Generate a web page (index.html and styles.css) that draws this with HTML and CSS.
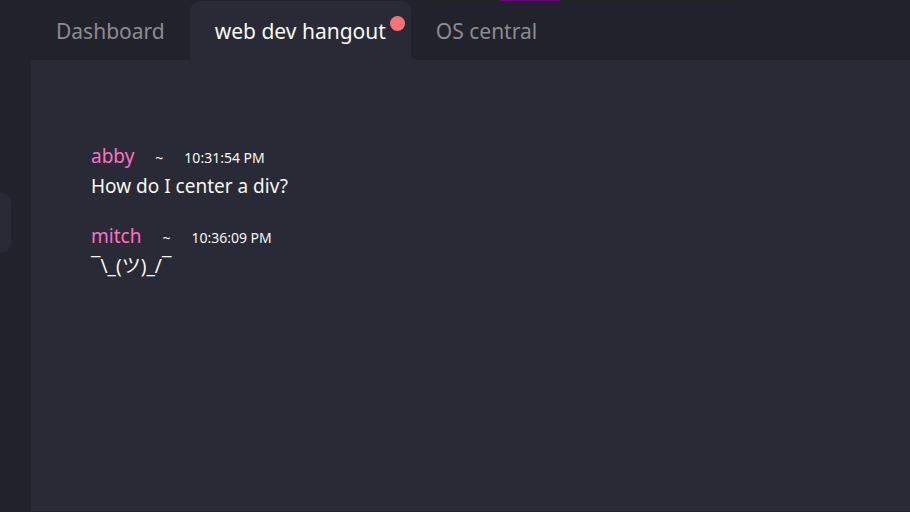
FILE: index.html
```html
<!DOCTYPE html>
<html lang="en">
<head>
<meta charset="utf-8">
<meta name="viewport" content="width=device-width, initial-scale=1">
<title>web dev hangout</title>
<link rel="stylesheet" href="styles.css">
</head>
<body>
<div class="app">
  <aside class="rail"><button class="rail-item" type="button" aria-label="Server"></button></aside>
  <div class="workspace">
    <nav class="tabs">
      <a class="tab" href="#dashboard">Dashboard</a>
      <a class="tab tab-active" href="#hangout" aria-current="page">web dev hangout<span class="unread"></span></a>
      <a class="tab" href="#central">OS central</a>
      <div class="progress"><span class="progress-mark"></span></div>
    </nav>
    <main class="chat">
      <article class="message">
        <header class="meta"><span class="author">abby</span><span class="sep">~</span><time>10:31:54 PM</time></header>
        <p class="text">How do I center a div?</p>
      </article>
      <article class="message">
        <header class="meta"><span class="author">mitch</span><span class="sep">~</span><time>10:36:09 PM</time></header>
        <p class="text">¯\_(ツ)_/¯</p>
      </article>
    </main>
  </div>
</div>
</body>
</html>
```
FILE: styles.css
```css
* { box-sizing: border-box; }

body {
  margin: 0;
  background: #22222c;
  color: #f8f8f2;
  font-family: "Segoe UI", "Noto Sans", "Noto Sans CJK JP", sans-serif;
}

.app {
  display: flex;
  min-height: 100vh;
}

.rail {
  flex: none;
  width: 31px;
  display: flex;
  align-items: flex-start;
  padding-top: 193px;
}

.rail-item {
  width: 11px;
  height: 60px;
  padding: 0;
  border: 0;
  border-radius: 0 10px 10px 0;
  background: #282a35;
}

.workspace {
  flex: 1;
  display: flex;
  flex-direction: column;
}

.tabs {
  position: relative;
  display: flex;
  height: 60px;
  padding-top: 1px;
}

.tab {
  position: relative;
  padding: 14px 25px 0;
  color: #8c8c8f;
  font-size: 21px;
  line-height: 32px;
  text-decoration: none;
  white-space: nowrap;
}

.tab-active {
  border-radius: 10px 10px 0 0;
  background: #282a35;
  color: #f8f8f2;
}

.tab-active::after {
  content: "";
  position: absolute;
  left: 100%;
  bottom: 0;
  width: 4px;
  height: 6px;
  background: radial-gradient(circle at 100% 0, transparent 4px, #282a35 5px);
}

.unread {
  position: absolute;
  top: 15px;
  right: 6px;
  width: 15px;
  height: 15px;
  border-radius: 50%;
  background: #fb7276;
}

.progress {
  position: absolute;
  top: 0;
  left: 409px;
  width: 300px;
  height: 1px;
  background: #20221f;
}

.progress-mark {
  display: block;
  width: 60px;
  height: 1px;
  margin-left: 60px;
  background: #6d007f;
}

.chat {
  flex: 1;
  display: flex;
  flex-direction: column;
  gap: 20px;
  padding: 81px 60px 60px;
  border-bottom: 1px solid #25212f;
  background: #282a35;
}

.meta {
  display: flex;
  align-items: baseline;
  gap: 21px;
  height: 30px;
  font-size: 14px;
  line-height: 30px;
}

.author {
  color: #ff70c4;
  font-size: 19px;
}

.text {
  height: 30px;
  margin: 0;
  font-size: 19px;
  line-height: 30px;
}
```
